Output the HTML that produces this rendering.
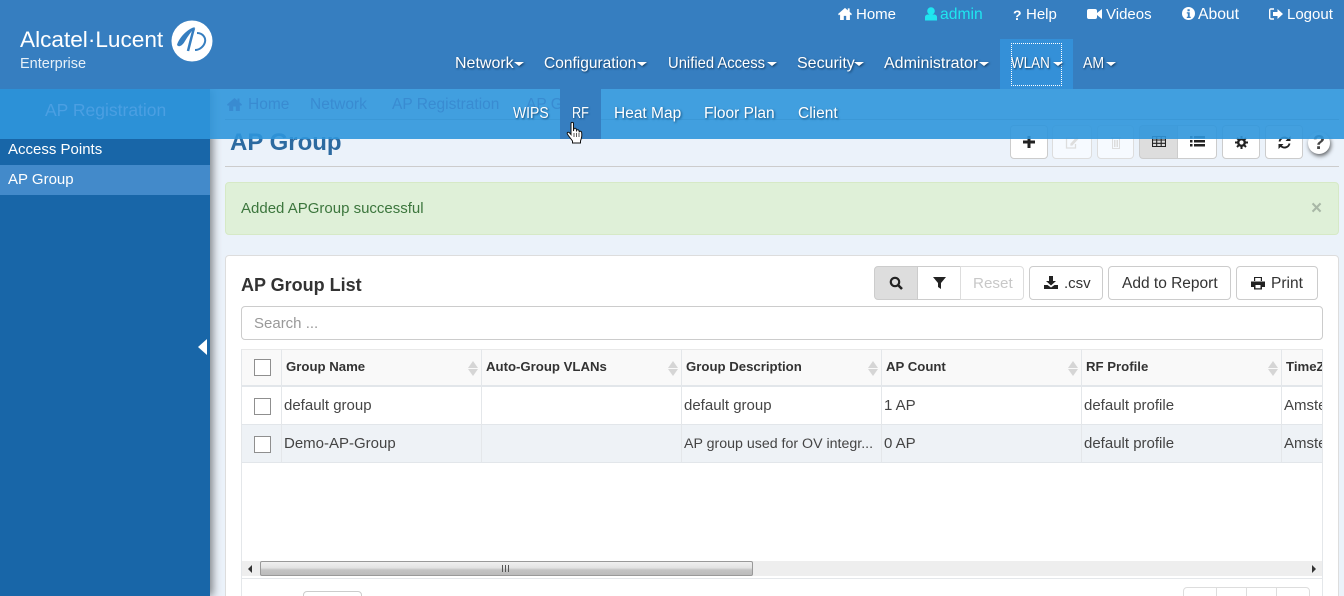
<!DOCTYPE html>
<html style="width:1344px;height:596px;overflow:hidden"><head><meta charset="utf-8"><title>AP Group</title>
<style>
html,body{margin:0;padding:0}
body{width:1344px;height:596px;overflow:hidden;position:relative;background:#ebf2fa;font-family:"Liberation Sans",sans-serif;font-size:15px;color:#333}
.a,.t,svg.i{position:absolute}
.t{white-space:nowrap;line-height:20px;transform-origin:0 50%}
.w{color:#fff}
.n{font-size:16px;color:#fff;text-shadow:1px 1px 2px #123a60}
.s{font-size:15.5px;color:#fff;text-shadow:1px 1px 2px #14507f}
.car{position:absolute;width:0;height:0;border-left:5px solid transparent;border-right:5px solid transparent;border-top:4px solid #fff;filter:drop-shadow(1px 1px 1px #123a60)}
.bc{font-size:15.5px;color:#398bd1}
.btn{position:absolute;box-sizing:border-box;background:#fff;border:1px solid #ccc;border-radius:4px}
.th{font-weight:bold;font-size:13.2px;color:#333}
.td{color:#444}
.cb{position:absolute;box-sizing:border-box;left:254px;width:17px;height:17px;background:#fff;border:1px solid #8f8f8f}
.vl{position:absolute;width:1px;background:#e4e7ea}
.sort{position:absolute;width:0;height:0;border-left:5px solid transparent;border-right:5px solid transparent}
.up{border-bottom:7px solid #d5d5d5;top:361px}
.dn{border-top:7px solid #d5d5d5;top:369px}
</style></head><body>

<!-- sidebar -->
<div class="a" style="left:0;top:89px;width:210px;height:507px;background:#1866a8;box-shadow:3px 0 8px rgba(0,0,0,.45)"></div>
<div class="t w" style="left:8px;top:140px">Access Points</div>
<div class="a" style="left:0;top:165px;width:210px;height:30px;background:#438aca"></div>
<div class="t w" style="left:8px;top:170px">AP Group</div>
<svg class="i" style="left:197px;top:338px" width="12" height="18"><path d="M1 9L10 1V17Z" fill="#fff"/></svg>

<!-- breadcrumb line + title -->
<div class="a" style="left:225px;top:119px;width:1114px;height:1px;background:#aaa"></div>
<div class="t" style="left:230px;top:129px;font-size:24px;line-height:28px;font-weight:bold;color:#2c6aa0">AP Group</div>
<div class="a" style="left:225px;top:166px;width:1114px;height:1px;background:#ccc"></div>

<!-- toolbar -->
<div class="btn" style="left:1010px;top:125px;width:38px;height:34px"></div>
<svg class="i" style="left:1023px;top:136px" width="12" height="12"><path d="M4.500 0h3v4.500H12v3H7.500V12h-3V7.500H0v-3h4.500z" fill="#222"/></svg>
<div class="btn" style="left:1052px;top:125px;width:40px;height:34px;background:#f6faff;border-color:#ddd"></div>
<svg class="i" style="left:1065px;top:136px" width="14" height="13" fill="none" stroke="#ddd" stroke-width="1.300"><path d="M10 2H1.500v10h9V8M6 8l6-6.500 1 1L7 9H6z"/></svg>
<div class="btn" style="left:1097px;top:125px;width:37px;height:34px;background:#f6faff;border-color:#ddd"></div>
<svg class="i" style="left:1111px;top:136px" width="10" height="13" fill="none" stroke="#ddd"><path d="M0 1.500h10M1.500 2v10.500h7V2M3.500 4v7M5 4v7M6.500 4v7"/></svg>
<div class="btn" style="left:1139px;top:125px;width:39px;height:34px;background:#ddd;border-radius:4px 0 0 4px"></div>
<svg class="i" style="left:1152px;top:136px" width="14" height="11" fill="none" stroke="#222" stroke-width="1.100"><path d="M.5.500h13v10H.5zM.5 4h13M.5 7.300h13M4.700.500v10M9.200.500v10"/></svg>
<div class="btn" style="left:1177px;top:125px;width:40px;height:34px;border-radius:0 4px 4px 0"></div>
<svg class="i" style="left:1190px;top:136px" width="15" height="11" fill="#222"><path d="M0 0h2.500v2.500H0zM4 0h11v2.500H4zM0 4h2.500v2.500H0zM4 4h11v2.500H4zM0 8h2.500v2.500H0zM4 8h11v2.500H4z"/></svg>
<div class="btn" style="left:1222px;top:125px;width:38px;height:34px"></div>
<svg class="i" style="left:1235px;top:136px" width="13" height="13" fill="none" stroke="#222"><circle cx="6.500" cy="6.500" r="3.300" stroke-width="2.400"/><path d="M6.500 0v2.500M6.500 10.500V13M0 6.500h2.500M10.500 6.500H13M2 2l1.800 1.800M9.200 9.200L11 11M11 2L9.200 3.800M3.800 9.200L2 11" stroke-width="2"/></svg>
<div class="btn" style="left:1265px;top:125px;width:38px;height:34px"></div>
<svg class="i" style="left:1278px;top:136px" width="13" height="13" fill="none" stroke="#222" stroke-width="1.900"><path d="M1.500 5.500A5 5 0 0 1 10 3M11.500 7.500A5 5 0 0 1 3 10"/><path d="M12.500 0v5h-5zM.5 13V8h5z" fill="#222" stroke="none"/></svg>
<div class="a" style="left:1308px;top:132px;width:22px;height:22px;border-radius:50%;background:#fff;box-shadow:1px 2px 4px rgba(0,0,0,.6)"></div>
<div class="t" style="left:1308px;top:133px;width:22px;text-align:center;font-size:20px;font-weight:bold;color:#444">?</div>

<!-- alert -->
<div class="a" style="left:225px;top:182px;width:1114px;height:53px;box-sizing:border-box;background:#dff0d8;border:1px solid #d6e9c6;border-radius:4px"></div>
<div class="t" style="left:241px;top:199px;color:#3c763d">Added APGroup successful</div>
<div class="t" style="left:1311px;top:199px;font-size:19px;font-weight:bold;color:#a9b8a7">×</div>

<!-- panel -->
<div class="a" style="left:225px;top:255px;width:1114px;height:360px;box-sizing:border-box;background:#fff;border:1px solid #ddd;border-radius:4px"></div>
<div class="t" style="left:241px;top:275px;font-size:18px;font-weight:bold;color:#333">AP Group List</div>

<div class="btn" style="left:874px;top:266px;width:44px;height:34px;background:#ddd;border-radius:4px 0 0 4px"></div>
<svg class="i" style="left:889px;top:276px" width="14" height="14" fill="none" stroke="#222" stroke-width="2.200"><circle cx="6" cy="6" r="4.200"/><path d="M9 9l4 4" stroke-width="2.600"/></svg>
<div class="btn" style="left:917px;top:266px;width:44px;height:34px;border-radius:0"></div>
<svg class="i" style="left:933px;top:277px" width="13" height="12"><path d="M0 0h13L8 6v6L5 10V6z" fill="#222"/></svg>
<div class="btn" style="left:960px;top:266px;width:64px;height:34px;border-color:#ddd;border-radius:0 4px 4px 0"></div>
<div class="t" style="left:973px;top:274px;color:#c8c8c8;font-size:15.200px">Reset</div>
<div class="btn" style="left:1029px;top:266px;width:74px;height:34px"></div>
<svg class="i" style="left:1044px;top:276px" width="14" height="13" fill="#222"><path d="M5 0h4v5h3L7 9.500 2 5h3zM0 9h3.500L7 11.500 10.500 9H14v4H0z"/></svg>
<div class="t" style="left:1064px;top:274px">.csv</div>
<div class="btn" style="left:1108px;top:266px;width:123px;height:34px"></div>
<div class="t" style="left:1122px;top:274px;font-size:15.500px">Add to Report</div>
<div class="btn" style="left:1236px;top:266px;width:82px;height:34px"></div>
<svg class="i" style="left:1251px;top:276px" width="14" height="14"><path d="M3 1h8v4H3zM0 5.500h14V11h-3v2.500H3V11H0zM4.500 9v3.200h5V9z" fill="#222"/><path d="M4.200 2h5.600v3H4.200z" fill="#fff"/></svg>
<div class="t" style="left:1271px;top:274px;font-size:15.500px">Print</div>

<div class="a" style="left:241px;top:306px;width:1082px;height:34px;box-sizing:border-box;border:1px solid #ccc;border-radius:4px;background:#fff"></div>
<div class="t" style="left:254px;top:314px;color:#999">Search ...</div>

<!-- table -->
<div class="a" style="left:241px;top:349px;width:1081px;height:36px;background:#f9f9f9;border-top:1px solid #e8e8e8;box-sizing:border-box"></div>
<div class="a" style="left:241px;top:385px;width:1081px;height:2px;background:#e2e6ea"></div>
<div class="a" style="left:241px;top:424px;width:1081px;height:39px;background:#eef2f6;border-top:1px solid #e2e6ea;border-bottom:1px solid #e2e6ea;box-sizing:border-box"></div>
<div class="a" style="left:241px;top:349px;width:1px;height:247px;background:#e4e7ea"></div>
<div class="a" style="left:1322px;top:349px;width:1px;height:247px;background:#e4e7ea"></div>
<div class="vl" style="left:281px;top:349px;height:113px"></div>
<div class="vl" style="left:481px;top:349px;height:113px"></div>
<div class="vl" style="left:681px;top:349px;height:113px"></div>
<div class="vl" style="left:881px;top:349px;height:113px"></div>
<div class="vl" style="left:1081px;top:349px;height:113px"></div>
<div class="vl" style="left:1281px;top:349px;height:113px"></div>

<div class="cb" style="top:359px"></div>
<div class="cb" style="top:398px"></div>
<div class="cb" style="top:436px"></div>

<div class="t th" style="left:286px;top:357px">Group Name</div>
<div class="t th" style="left:486px;top:357px">Auto-Group VLANs</div>
<div class="t th" style="left:686px;top:357px">Group Description</div>
<div class="t th" style="left:886px;top:357px">AP Count</div>
<div class="t th" style="left:1086px;top:357px">RF Profile</div>
<div class="a" style="left:1286px;top:357px;width:36px;height:20px;overflow:hidden"><div class="t th" style="left:0;top:0">TimeZone</div></div>

<div class="sort up" style="left:468px"></div><div class="sort dn" style="left:468px"></div>
<div class="sort up" style="left:668px"></div><div class="sort dn" style="left:668px"></div>
<div class="sort up" style="left:868px"></div><div class="sort dn" style="left:868px"></div>
<div class="sort up" style="left:1068px"></div><div class="sort dn" style="left:1068px"></div>
<div class="sort up" style="left:1268px"></div><div class="sort dn" style="left:1268px"></div>

<div class="t td" style="left:284px;top:396px">default group</div>
<div class="t td" style="left:684px;top:396px">default group</div>
<div class="t td" style="left:884px;top:396px">1 AP</div>
<div class="t td" style="left:1084px;top:396px">default profile</div>
<div class="a" style="left:1284px;top:396px;width:38px;height:20px;overflow:hidden"><div class="t td" style="left:0;top:0">Amsterdam</div></div>
<div class="t td" style="left:284px;top:434px">Demo-AP-Group</div>
<div class="t td" style="left:684px;top:434px;font-size:14.200px">AP group used for OV integr...</div>
<div class="t td" style="left:884px;top:434px">0 AP</div>
<div class="t td" style="left:1084px;top:434px">default profile</div>
<div class="a" style="left:1284px;top:434px;width:38px;height:20px;overflow:hidden"><div class="t td" style="left:0;top:0">Amsterdam</div></div>

<!-- scrollbar -->
<div class="a" style="left:242px;top:561px;width:1080px;height:15px;background:#eee"></div>
<svg class="i" style="left:247px;top:565px" width="6" height="8"><path d="M5 0v8L1 4z" fill="#333"/></svg>
<svg class="i" style="left:1311px;top:565px" width="6" height="8"><path d="M1 0v8L5 4z" fill="#333"/></svg>
<div class="a" style="left:260px;top:561px;width:493px;height:15px;box-sizing:border-box;border:1px solid #999;border-radius:2px;background:linear-gradient(#f0f0f0 0,#e2e2e2 45%,#c4c4c4 60%,#bbb 100%)"></div>
<svg class="i" style="left:502px;top:565px" width="8" height="7"><path d="M.5 0v7M3.500 0v7M6.500 0v7" stroke="#555"/></svg>
<div class="a" style="left:242px;top:578px;width:1080px;height:1px;background:#e4e7ea"></div>

<!-- footer controls -->
<div class="btn" style="left:303px;top:591px;width:59px;height:34px"></div>
<div class="btn" style="left:1183px;top:587px;width:127px;height:34px;border-color:#ddd"></div>
<div class="vl" style="left:1216px;top:587px;height:9px;background:#ddd"></div>
<div class="vl" style="left:1246px;top:587px;height:9px;background:#ddd"></div>
<div class="vl" style="left:1276px;top:587px;height:9px;background:#ddd"></div>

<!-- translucent sub bar -->
<div class="a" style="left:0;top:89px;width:1344px;height:50px;background:rgba(47,150,220,.9)"></div>
<div class="a" style="left:560px;top:89px;width:41px;height:50px;background:#367ec0"></div>
<div class="t" style="left:45px;top:100px;font-size:17.5px;color:#4b9fe2">AP Registration</div>
<svg class="i" style="left:227px;top:97px" width="15" height="14" viewBox="0 0 15 14"><path d="M7.500 1L0 7.500 1 9l1.200-1V14h4V9.500h2.600V14h4V8L14 9l1-1.500L12.500 5.300V1.500h-2V3.600z" fill="#398bd1"/></svg>
<div class="t bc" style="left:248px;top:95px">Home</div>
<div class="t bc" style="left:310px;top:95px">Network</div>
<div class="t bc" style="left:392px;top:95px">AP Registration</div>
<div class="a" style="left:526px;top:95px;width:34px;height:20px;overflow:hidden"><div class="t bc" style="left:0;top:0">AP Group</div></div>
<div class="t s" style="left:513px;top:104px;transform:scaleX(.9)">WIPS</div>
<div class="t s" style="left:572px;top:104px;transform:scaleX(.82)">RF</div>
<div class="t s" style="left:614px;top:104px">Heat Map</div>
<div class="t s" style="left:704px;top:104px">Floor Plan</div>
<div class="t s" style="left:798px;top:104px">Client</div>

<!-- header -->
<div class="a" style="left:0;top:0;width:1344px;height:89px;background:#367ec0"></div>
<div class="t w" style="left:20px;top:28px;font-size:22.600px;line-height:24px">Alcatel·Lucent</div>
<div class="t w" style="left:20px;top:54px;font-size:14.500px;color:#e6f0f8">Enterprise</div>
<svg class="i" style="left:171px;top:20px" width="42" height="42" viewBox="0 0 42 42"><circle cx="21" cy="21" r="20.500" fill="#fff"/><path d="M24 7C16 9 8 18 6 25 8 28 12 25 14 21 17 16 20 12 24 7z" fill="#367ec0"/><path d="M23 8C21 15 19 23 17 31" fill="none" stroke="#367ec0" stroke-width="2.500"/><path d="M26 13C32 13 35 18 34 22 33 26 29 30 24 30" fill="none" stroke="#367ec0" stroke-width="2"/></svg>

<svg class="i" style="left:838px;top:7px" width="14" height="13" viewBox="0 0 15 14"><path d="M7.500 1L0 7.500 1 9l1.200-1V14h4V9.500h2.600V14h4V8L14 9l1-1.500L12.500 5.300V1.500h-2V3.600z" fill="#fff"/></svg>
<div class="t w" style="left:856px;top:5px">Home</div>
<svg class="i" style="left:925px;top:7px" width="12" height="14" fill="#1fe6f0"><circle cx="6" cy="4" r="3.800"/><path d="M0 13.500V10c0-1.500 1.500-2.500 3-2.500h6c1.500 0 3 1 3 2.500v3.500z"/></svg>
<div class="t" style="left:940px;top:5px;color:#1fe6f0;font-size:15.700px">admin</div>
<div class="t w" style="left:1013px;top:5px;font-weight:bold;font-size:14px">?</div>
<div class="t w" style="left:1026px;top:5px">Help</div>
<svg class="i" style="left:1087px;top:8px" width="15" height="12" fill="#fff"><rect x="0" y="1" width="10" height="10" rx="2"/><path d="M10 5l5-4v10l-5-4z"/></svg>
<div class="t w" style="left:1106px;top:5px">Videos</div>
<svg class="i" style="left:1182px;top:7px" width="13" height="13"><circle cx="6.500" cy="6.500" r="6.500" fill="#fff"/><path d="M5.500 2.200h2.200v2H5.500zM4.800 5.300h2.900v4.500h1v1.200H4.800V9.800h1V6.500h-1z" fill="#367ec0"/></svg>
<div class="t w" style="left:1198px;top:5px;font-size:15.700px">About</div>
<svg class="i" style="left:1269px;top:8px" width="14" height="12"><path d="M5 1H2C1 1 .7 1.500.7 2.500v7c0 1 .3 1.500 1.300 1.500h3" fill="none" stroke="#fff" stroke-width="1.400"/><path d="M4 4h4.500V1L14 6l-5.500 5V8H4z" fill="#fff"/></svg>
<div class="t w" style="left:1287px;top:5px">Logout</div>

<div class="a" style="left:1000px;top:39px;width:73px;height:50px;background:#3490d8"></div>
<div class="a" style="left:1011px;top:43px;width:51px;height:43px;box-sizing:border-box;border:1px dotted #fff"></div>
<div class="t n" style="left:455px;top:54px">Network</div><div class="car" style="left:514px;top:62px"></div>
<div class="t n" style="left:544px;top:54px;transform:scaleX(.97)">Configuration</div><div class="car" style="left:637px;top:62px"></div>
<div class="t n" style="left:668px;top:54px;transform:scaleX(.925)">Unified Access</div><div class="car" style="left:767px;top:62px"></div>
<div class="t n" style="left:797px;top:54px">Security</div><div class="car" style="left:854px;top:62px"></div>
<div class="t n" style="left:884px;top:54px">Administrator</div><div class="car" style="left:979px;top:62px"></div>
<div class="t n" style="left:1011px;top:54px;transform:scaleX(.84)">WLAN</div><div class="car" style="left:1053px;top:62px"></div>
<div class="t n" style="left:1083px;top:54px;transform:scaleX(.88)">AM</div><div class="car" style="left:1106px;top:62px"></div>

<!-- hand cursor -->
<svg class="i" style="left:566px;top:121px" width="20" height="24" viewBox="0 0 20 24"><path d="M5 2.500C5 1 7.500 1 7.500 2.500V10l.3-2c.5-1 2.200-1 2.500.2l.2 1.300c.4-1 2.200-1 2.500.2l.2 1c.5-.8 2.200-.6 2.400.6.3 2 .2 4.500-.3 6.200l-.8 2.500v2H6.500v-2L2.700 15c-1-1.300-1.700-2.300-1.500-3 .3-1 1.700-.9 2.500 0L5 13.500z" fill="#fff" stroke="#111" stroke-width="1"/><path d="M8 12v4M10.500 12v4M13 12v4" stroke="#111" stroke-width=".7"/></svg>
</body></html>
